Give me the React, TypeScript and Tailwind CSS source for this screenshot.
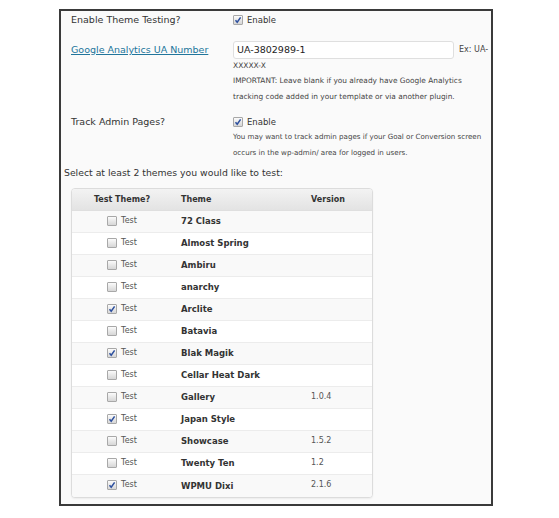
import React from "react";

const themes: { name: string; version: string; checked: boolean }[] = [
  { name: "72 Class", version: "", checked: false },
  { name: "Almost Spring", version: "", checked: false },
  { name: "Ambiru", version: "", checked: false },
  { name: "anarchy", version: "", checked: false },
  { name: "Arclite", version: "", checked: true },
  { name: "Batavia", version: "", checked: false },
  { name: "Blak Magik", version: "", checked: true },
  { name: "Cellar Heat Dark", version: "", checked: false },
  { name: "Gallery", version: "1.0.4", checked: false },
  { name: "Japan Style", version: "", checked: true },
  { name: "Showcase", version: "1.5.2", checked: false },
  { name: "Twenty Ten", version: "1.2", checked: false },
  { name: "WPMU Dixi", version: "2.1.6", checked: true },
];

function Box({ checked }: { checked?: boolean }) {
  return (
    <span className="inline-flex w-[10px] h-[10px] shrink-0 items-center justify-center rounded-[1px] border border-[#a8a8a8] bg-gradient-to-b from-[#fbfbfb] to-[#d6d6d6]">
      {checked && (
        <svg width="8" height="8" viewBox="0 0 8 8">
          <path d="M1.5 4.3 L3.2 6.2 L6.6 1.4" fill="none" stroke="#2c4f9e" strokeWidth="1.5" />
        </svg>
      )}
    </span>
  );
}

export default function App() {
  return (
    <div className="min-h-[518px] w-[559px] bg-white" style={{ fontFamily: '"DejaVu Sans", Verdana, sans-serif' }}>
      <div className="ml-[59px] mt-[9px] w-[434px] h-[497px] border-2 border-[#3a3a3a] bg-[#fafafa] pt-[2px] text-[#333]">
        {/* enable */}
        <div className="flex h-[14px] items-center text-[9.5px] leading-[14px]">
          <div className="w-[172px] pl-[10px]">Enable Theme Testing?</div>
          <label className="flex items-center gap-[4px] text-[8.5px]">
            <Box checked />
            <span>Enable</span>
          </label>
        </div>

        {/* UA number */}
        <div className="mt-[14px] flex">
          <div className="w-[172px] pl-[10px] h-[18px] flex items-center text-[9.5px]">
            <a className="text-[#21759b] underline decoration-[#21759b]">Google Analytics UA Number</a>
          </div>
          <div className="flex-1">
            <div className="flex items-center h-[18px]">
              <div className="w-[221px] h-[18px] rounded-[3px] border border-[#dfdfdf] bg-white px-[3px] flex items-center text-[9.5px] text-[#222]">
                UA-3802989-1
              </div>
              <span className="ml-[5px] text-[8px] text-[#444]">Ex: UA-</span>
            </div>
            <div className="h-[14px] leading-[14px] text-[7.5px] text-[#444]">XXXXX-X</div>
            <div className="text-[7.4px] leading-[15.5px] text-[#444]">
              <div>IMPORTANT: Leave blank if you already have Google Analytics</div>
              <div>tracking code added in your template or via another plugin.</div>
            </div>
          </div>
        </div>

        {/* admin pages */}
        <div className="mt-[11px] flex">
          <div className="w-[172px] pl-[10px] h-[14px] leading-[14px] text-[9.5px]">Track Admin Pages?</div>
          <div className="flex-1">
            <label className="flex h-[14px] items-center gap-[4px] text-[8.5px]">
              <Box checked />
              <span>Enable</span>
            </label>
            <div className="text-[7.1px] leading-[15.5px] text-[#444] whitespace-nowrap">
              <div>You may want to track admin pages if your Goal or Conversion screen</div>
              <div>occurs in the wp-admin/ area for logged in users.</div>
            </div>
          </div>
        </div>

        <div className="mt-[6px] pl-[3px] h-[14px] leading-[14px] text-[9.3px]">
          Select at least 2 themes you would like to test:
        </div>

        {/* themes table */}
        <div className="ml-[10px] mt-[8px] w-[302px] overflow-hidden rounded-[4px] border border-[#dcdcdc] bg-white shadow-[0_1px_2px_rgba(0,0,0,0.06)]">
          <div className="flex h-[22px] items-center bg-gradient-to-b from-[#f3f3f3] to-[#e3e3e3] text-[8px] font-bold text-[#333] border-b border-[#dfdfdf]">
            <div className="w-[100px] text-center">Test Theme?</div>
            <div className="w-[130px] pl-[9px]">Theme</div>
            <div className="flex-1 pl-[9px]">Version</div>
          </div>
          {themes.map((t, i) => (
            <div
              key={t.name}
              className={`flex h-[22px] items-center border-b border-[#ececec] last:border-b-0 ${i % 2 === 0 ? "bg-[#f9f9f9]" : "bg-white"}`}
            >
              <div className="w-[100px] flex items-center justify-center gap-[4px] text-[8px] text-[#555] -mt-[2px]">
                <Box checked={t.checked} />
                <span>Test</span>
              </div>
              <div className="w-[130px] pl-[9px] text-[8.5px] font-bold text-[#333]">{t.name}</div>
              <div className="flex-1 pl-[9px] text-[8px] text-[#555] -mt-[2px]">{t.version}</div>
            </div>
          ))}
        </div>
      </div>
    </div>
  );
}
